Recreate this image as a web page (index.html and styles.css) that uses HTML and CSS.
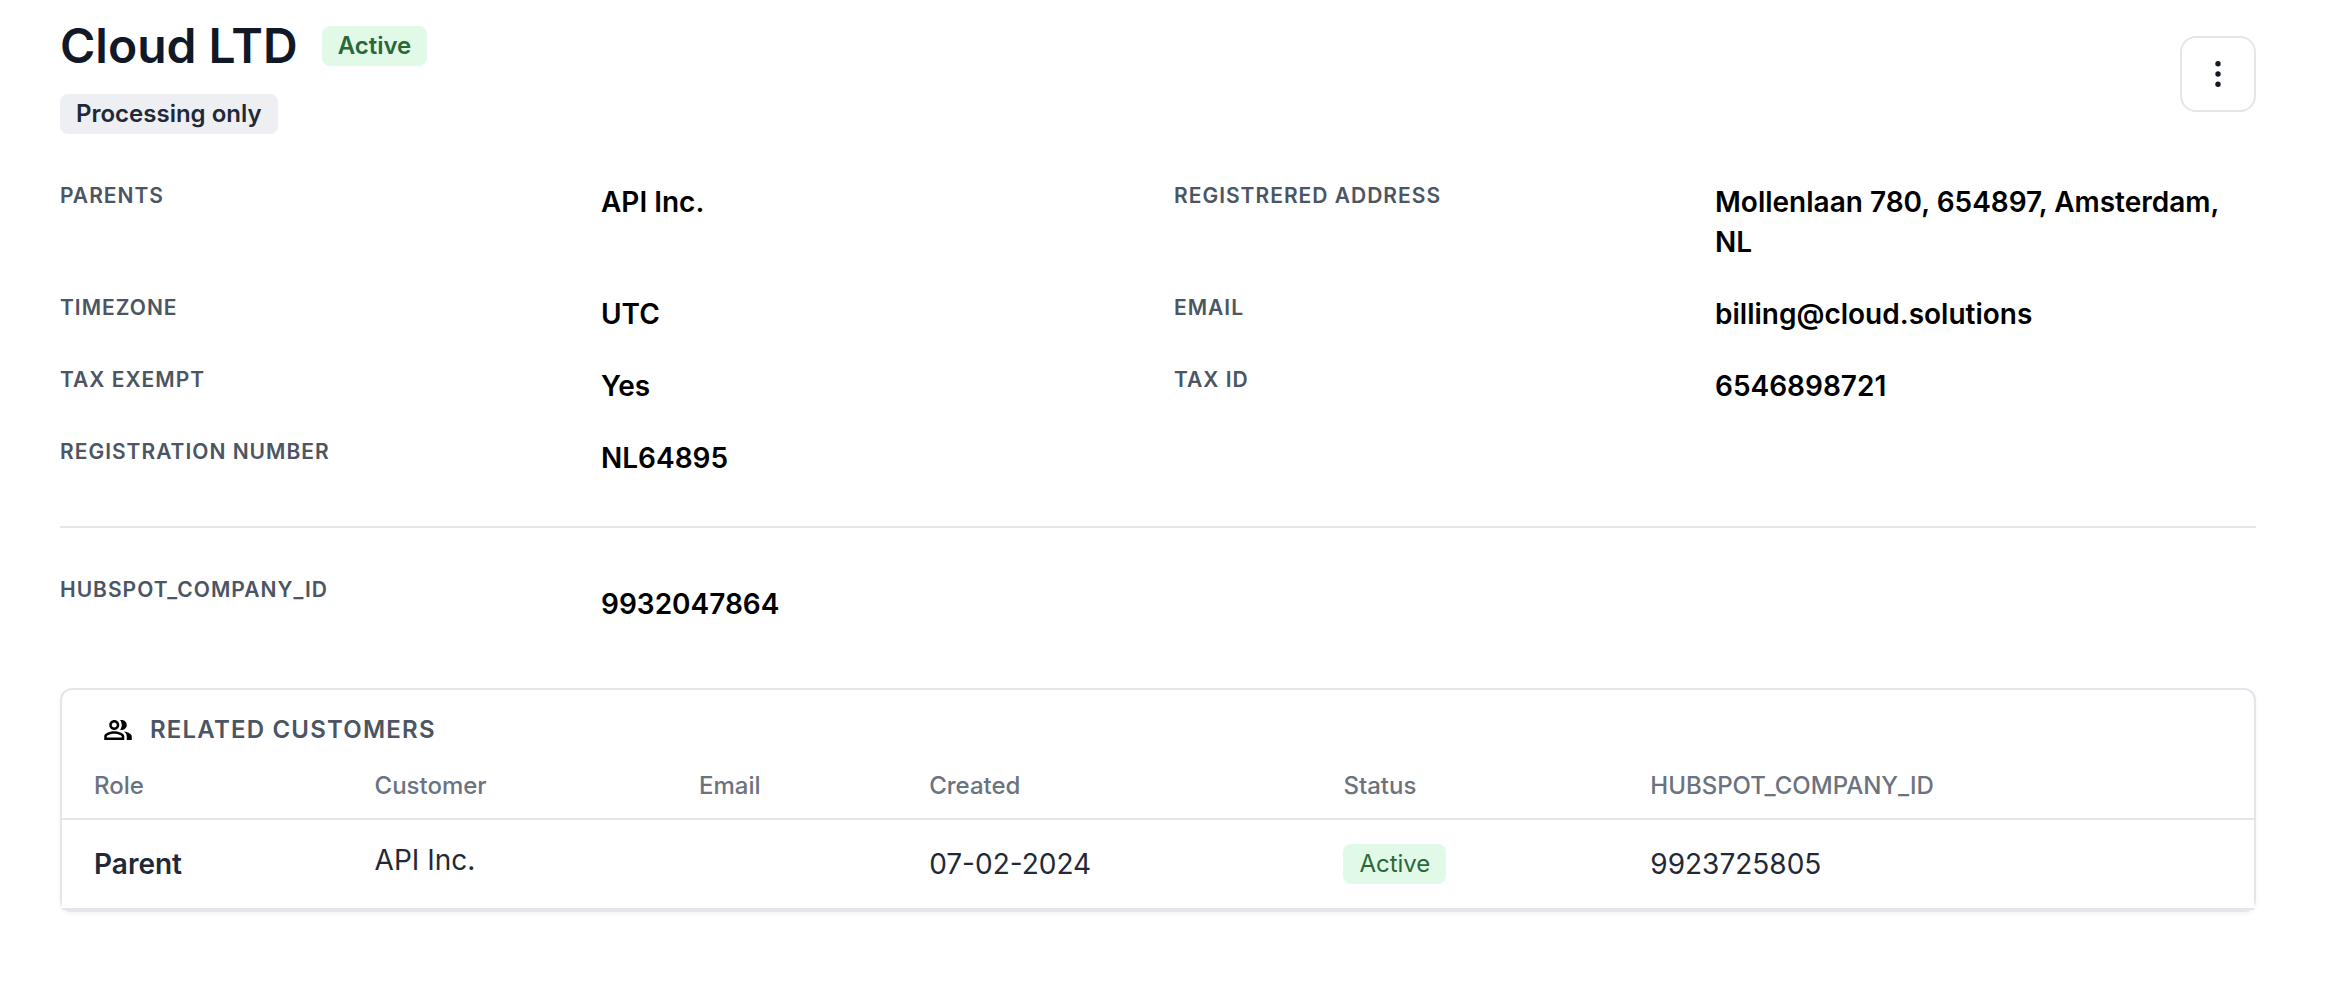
FILE: index.html
```html
<!DOCTYPE html>
<html lang="en">
<head>
  <meta charset="utf-8">
  <meta name="viewport" content="width=device-width, initial-scale=1">
  <title>Cloud LTD</title>
  <link rel="stylesheet" href="styles.css">
</head>
<body>
  <main class="page">
    <header class="header">
      <div class="heading">
        <div class="title-row">
          <h1 class="title">Cloud LTD</h1>
          <span class="badge badge-green badge-strong">Active</span>
        </div>
        <span class="badge badge-gray badge-strong">Processing only</span>
      </div>
      <button class="menu-button" type="button" aria-label="More actions">
        <svg class="menu-icon" viewBox="0 0 32 32" aria-hidden="true">
          <circle cx="16" cy="5.7" r="2.7"/>
          <circle cx="16" cy="16" r="2.7"/>
          <circle cx="16" cy="26.3" r="2.7"/>
        </svg>
      </button>
    </header>

    <dl class="details">
      <div class="field"><dt>PARENTS</dt><dd>API Inc.</dd></div>
      <div class="field"><dt>REGISTRERED ADDRESS</dt><dd>Mollenlaan 780, 654897, Amsterdam, NL</dd></div>
      <div class="field"><dt>TIMEZONE</dt><dd>UTC</dd></div>
      <div class="field"><dt>EMAIL</dt><dd>billing@cloud.solutions</dd></div>
      <div class="field"><dt>TAX EXEMPT</dt><dd>Yes</dd></div>
      <div class="field"><dt>TAX ID</dt><dd>6546898721</dd></div>
      <div class="field"><dt>REGISTRATION NUMBER</dt><dd>NL64895</dd></div>
    </dl>

    <dl class="details details-custom">
      <div class="field"><dt>HUBSPOT_COMPANY_ID</dt><dd>9932047864</dd></div>
    </dl>

    <section class="card" aria-labelledby="related-title">
      <div class="card-header">
        <svg class="card-icon" viewBox="-0.8 -0.8 25.6 25.6" aria-hidden="true">
          <path d="M16.67 13.13C18.04 14.06 19 15.32 19 17v3h4v-3c0-2.18-3.57-3.47-6.33-3.87zM15 12c2.21 0 4-1.79 4-4s-1.79-4-4-4c-.47 0-.91.1-1.33.24C14.5 5.27 15 6.58 15 8s-.5 2.73-1.33 3.76c.42.14.86.24 1.33.24zM9 12c2.21 0 4-1.79 4-4s-1.79-4-4-4-4 1.79-4 4 1.79 4 4 4zm0-6c1.1 0 2 .9 2 2s-.9 2-2 2-2-.9-2-2 .9-2 2-2zm0 7c-2.67 0-8 1.34-8 4v3h16v-3c0-2.66-5.33-4-8-4zm6 5H3v-.99C3.2 16.29 6.3 15 9 15s5.8 1.29 6 2v1z"/>
        </svg>
        <h2 class="card-title" id="related-title">RELATED CUSTOMERS</h2>
      </div>
      <table class="table">
        <colgroup>
          <col class="col-role"><col class="col-customer"><col class="col-email"><col class="col-created"><col class="col-status"><col>
        </colgroup>
        <thead>
          <tr>
            <th scope="col">Role</th>
            <th scope="col">Customer</th>
            <th scope="col">Email</th>
            <th scope="col">Created</th>
            <th scope="col">Status</th>
            <th scope="col">HUBSPOT_COMPANY_ID</th>
          </tr>
        </thead>
        <tbody>
          <tr>
            <td class="cell-role">Parent</td>
            <td class="cell-customer">API Inc.</td>
            <td></td>
            <td>07-02-2024</td>
            <td><span class="badge badge-green">Active</span></td>
            <td>9923725805</td>
          </tr>
        </tbody>
      </table>
    </section>
  </main>
</body>
</html>
```
FILE: styles.css
```css
*,
*::before,
*::after {
  box-sizing: border-box;
}

body {
  margin: 0;
  background: #fff;
  color: #000;
  font-family: Inter, "Liberation Sans", sans-serif;
  font-size: 28px;
  line-height: 40px;
}

h1,
h2,
dl,
dd {
  margin: 0;
}

.page {
  padding: 14px 78px 40px 60px;
}

.header {
  display: flex;
  align-items: center;
  justify-content: space-between;
  margin-bottom: 48px;
}

.heading {
  display: flex;
  flex-direction: column;
  align-items: flex-start;
  gap: 16px;
}

.title-row {
  display: flex;
  align-items: center;
  gap: 24px;
}

.title {
  color: #111827;
  font-size: 48px;
  font-weight: 600;
  line-height: 64px;
}

.badge {
  display: block;
  width: fit-content;
  padding: 4px 16px;
  border-radius: 8px;
  font-size: 24px;
  line-height: 32px;
}

.badge-strong {
  font-weight: 600;
}

.badge-green {
  background: #e1fae7;
  color: #2c673a;
}

.badge-gray {
  background: #eeeff3;
  color: #1f2937;
}

.menu-button {
  display: grid;
  place-items: center;
  width: 76px;
  height: 76px;
  padding: 0;
  border: 2px solid #e5e5eb;
  border-radius: 16px;
  background: #fff;
  color: #111827;
}

.menu-icon {
  width: 32px;
  height: 32px;
  fill: currentColor;
}

.details {
  display: grid;
  grid-template-columns: 1fr 1fr;
  gap: 32px;
}

.field {
  display: grid;
  grid-template-columns: 1fr 1fr;
}

.field dt {
  color: #4b5563;
  font-size: 21px;
  font-weight: 600;
  line-height: 28px;
  letter-spacing: 1px;
}

.field dd {
  font-weight: 600;
}

.details-custom {
  margin: 48px 0 64px;
  padding-top: 48px;
  border-top: 2px solid #e5e5eb;
}

.details-custom dd {
  padding-top: 8px;
}

.card {
  border: 2px solid #e5e5eb;
  border-radius: 12px;
  box-shadow: 0 2px 4px rgba(0, 0, 0, 0.05);
}

.card-header {
  display: flex;
  align-items: center;
  gap: 16px;
  padding: 24px 40px 12px;
}

.card-icon {
  width: 32px;
  height: 32px;
}

.card-title {
  color: #4b5563;
  font-size: 24px;
  font-weight: 600;
  line-height: 32px;
  letter-spacing: 0.05em;
}

.table {
  width: 100%;
  border-spacing: 0;
  table-layout: fixed;
  background: #fff;
  color: #1f2937;
}

.col-role {
  width: 12.8%;
}

.col-customer {
  width: 14.8%;
}

.col-email {
  width: 10.5%;
}

.col-created {
  width: 18.9%;
}

.col-status {
  width: 14%;
}

.table th,
.table td {
  padding: 24px 32px;
  border-bottom: 2px solid #e5e5eb;
  text-align: left;
}

.table th {
  padding-top: 12px;
  padding-bottom: 16px;
  color: #6b7280;
  font-size: 24px;
  font-weight: 500;
  line-height: 32px;
}

.table .cell-role {
  font-weight: 600;
}

.table .cell-customer {
  padding-top: 20px;
  padding-bottom: 28px;
}
```
